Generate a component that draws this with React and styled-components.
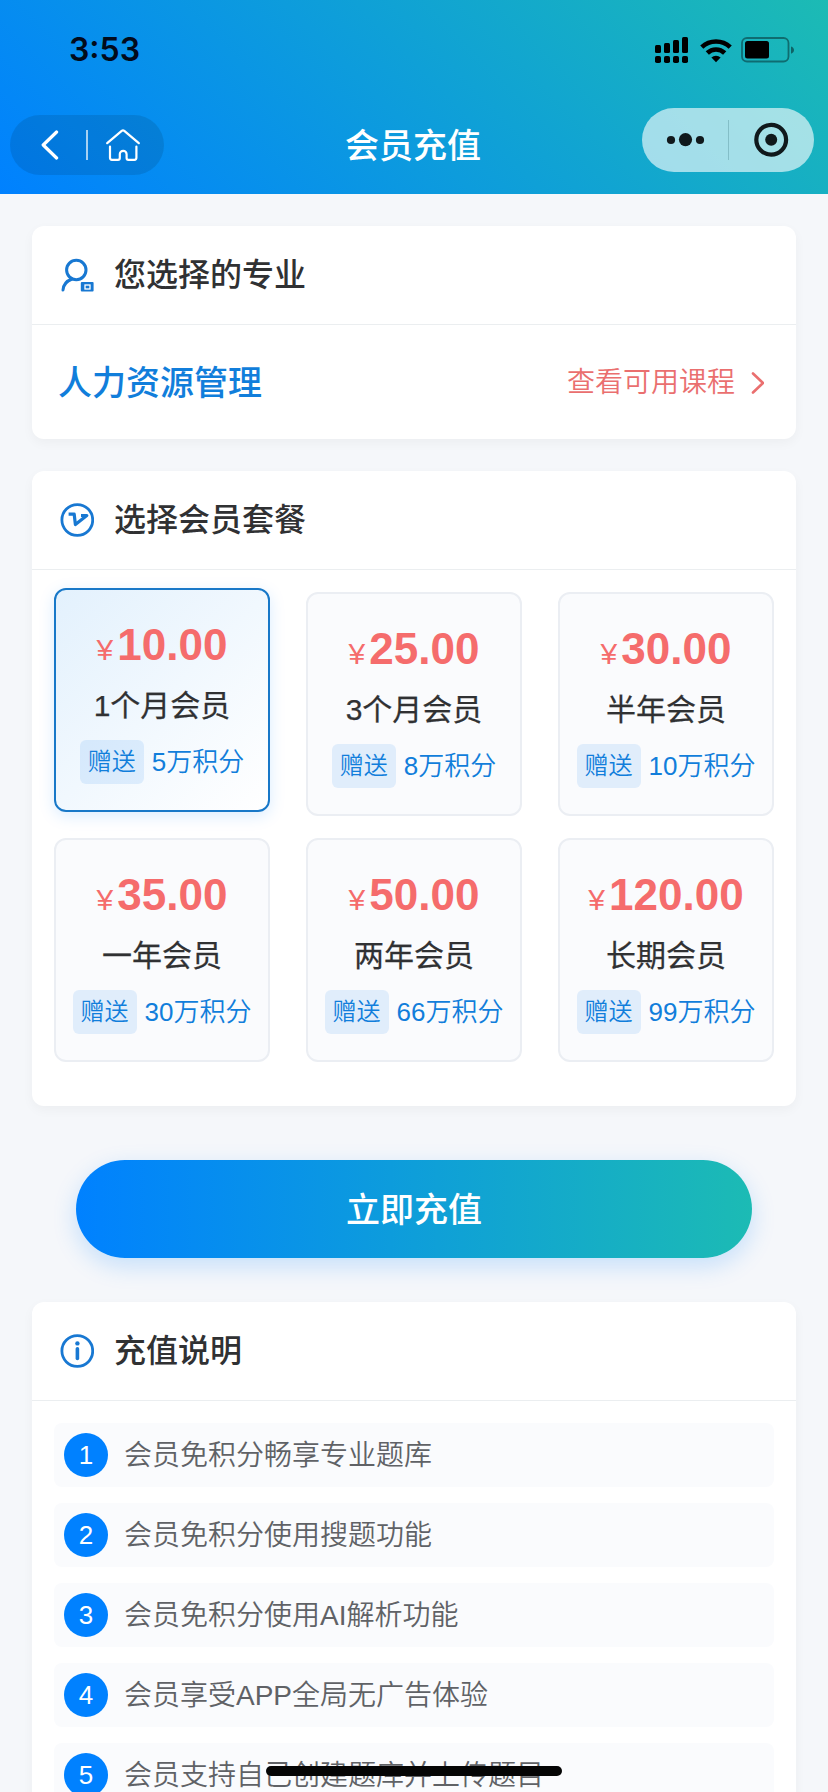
import React from "react";
import styled, { createGlobalStyle, css } from "styled-components";

const BLUE = "#117edb";
const INK = "#303133";
const CORAL = "#f56c6c";

const GlobalStyle = createGlobalStyle`
  *, *::before, *::after { box-sizing: border-box; }
  body {
    margin: 0;
    background: #f5f7fa;
    font-family: "Liberation Sans", "Noto Sans CJK SC", sans-serif;
  }
`;

const Screen = styled.div`
  position: relative;
  width: 828px;
  height: 1792px;
  overflow: hidden;
  background: #f5f7fa;
`;

const Header = styled.header`
  height: 194px;
  background: linear-gradient(45deg, #0081ff, #1cbbb4);
`;

const StatusBar = styled.div`
  display: flex;
  align-items: center;
  justify-content: space-between;
  height: 100px;
  padding: 0 34px 0 69px;
`;

const Clock = styled.span`
  font: 600 32px/40px Inter, sans-serif;
  color: #020b1c;
`;

const StatusIcons = styled.div`
  display: flex;
  align-items: center;
  gap: 12px;
`;

const NavBar = styled.nav`
  display: grid;
  grid-template-columns: 1fr auto 1fr;
  align-items: start;
  padding: 0 14px 0 10px;
`;

const BackPill = styled.div`
  display: flex;
  align-items: center;
  justify-self: start;
  width: 154px;
  height: 60px;
  margin-top: 15px;
  padding-left: 31px;
  border-radius: 30px;
  background: rgba(0, 0, 0, 0.1);
`;

const PillRule = styled.i`
  width: 2px;
  height: 30px;
  margin: 0 18px 0 27px;
  background: rgba(255, 255, 255, 0.65);
`;

const NavTitle = styled.h1`
  margin: 21px 0 0;
  padding-left: 2px;
  color: #fff;
  font-size: 34px;
  line-height: 50px;
  font-weight: 500;
`;

const Capsule = styled.div`
  display: flex;
  align-items: center;
  justify-self: end;
  width: 172px;
  height: 64px;
  margin-top: 8px;
  padding-left: 24px;
  border-radius: 32px;
  background: rgba(255, 255, 255, 0.61);
`;

const CapsuleRule = styled.i`
  width: 1px;
  height: 40px;
  margin: 0 24px 0 23px;
  background: rgba(0, 60, 70, 0.2);
`;

const Content = styled.main`
  display: flex;
  flex-direction: column;
  padding: 32px 32px 0;
`;

const Card = styled.section`
  margin-bottom: ${(p) => p.$after || 0}px;
  border-radius: 12px;
  background: #fff;
  box-shadow: 0 4px 12px rgba(0, 0, 0, 0.04);
`;

const CardHeader = styled.div`
  display: flex;
  align-items: center;
  gap: 20px;
  height: 99px;
  padding: 0 28px;
  border-bottom: 1px solid #ebeef0;
`;

const CardTitle = styled.h2`
  margin: 0;
  color: ${INK};
  font-size: 32px;
  line-height: 48px;
  font-weight: 500;
`;

const MajorRow = styled.div`
  display: flex;
  align-items: center;
  justify-content: space-between;
  height: 114px;
  padding: 2px 32px 0 26px;
`;

const Major = styled.strong`
  color: ${BLUE};
  font-size: 34px;
  line-height: 50px;
  font-weight: 500;
`;

const CourseLink = styled.a`
  display: flex;
  align-items: center;
  gap: 15px;
  color: #ea6f6f;
  font-size: 28px;
  font-weight: 350;
  line-height: 40px;
`;

const PlanGrid = styled.div`
  display: grid;
  grid-template-columns: repeat(3, 216px);
  gap: 22px 36px;
  padding: 22px 22px 44px;
`;

const PlanCard = styled.div`
  display: flex;
  flex-direction: column;
  align-items: center;
  height: 224px;
  padding-top: 27px;
  border: 2px solid #ebeef3;
  border-radius: 12px;
  background: #fafbfd;
  ${(p) =>
    p.$selected &&
    css`
      border-color: #1878c8;
      background: linear-gradient(135deg, #e3f1fd, #fff);
      box-shadow: 0 4px 16px rgba(0, 129, 255, 0.15);
      transform: translateY(-4px);
    `}
`;

const Price = styled.div`
  display: flex;
  align-items: baseline;
  gap: 4px;
  height: 56px;
  color: ${CORAL};
  font-size: 44px;
  line-height: 56px;
  font-weight: 700;
`;

const Currency = styled.span`
  font-size: 30px;
  font-weight: 400;
  font-family: "Liberation Sans", sans-serif;
`;

const PlanName = styled.div`
  margin-top: 13px;
  color: ${INK};
  font-size: 30px;
  line-height: 40px;
  -webkit-text-stroke: 0.25px currentColor;
`;

const Bonus = styled.div`
  display: flex;
  align-items: center;
  gap: 8px;
  margin-top: 14px;
  color: ${BLUE};
  font-size: 26px;
  font-weight: 350;
  line-height: 44px;
  white-space: nowrap;
`;

const BonusTag = styled.span`
  padding: 0 8px;
  border-radius: 6px;
  background: rgba(0, 118, 240, 0.1);
  font-size: 24px;
`;

const PayButton = styled.button`
  height: 98px;
  margin: 54px 44px 44px;
  padding: 2px 0 0;
  border: 0;
  border-radius: 49px;
  background: linear-gradient(90deg, #0081ff, #1cbbb4);
  box-shadow: 0 8px 24px rgba(0, 129, 255, 0.2);
  color: #fff;
  font-family: inherit;
  font-size: 34px;
  font-weight: 500;
  line-height: 96px;
`;

const NoteList = styled.ol`
  display: flex;
  flex-direction: column;
  gap: 16px;
  margin: 0;
  padding: 22px;
  list-style: none;
`;

const Note = styled.li`
  display: flex;
  align-items: center;
  gap: 16px;
  height: 64px;
  padding-left: 10px;
  border-radius: 8px;
  background: #fafbfd;
  color: #606266;
  font-size: 28px;
  font-weight: 350;
  line-height: 40px;
`;

const NoteText = styled.span`
  padding-top: 2px;
`;

const NoteNumber = styled.span`
  width: 44px;
  height: 44px;
  border-radius: 50%;
  background: #0081ff;
  color: #fff;
  font-size: 26px;
  line-height: 44px;
  text-align: center;
`;

const HomeIndicator = styled.div`
  position: absolute;
  left: 266px;
  bottom: 16px;
  width: 296px;
  height: 10px;
  border-radius: 5px;
  background: #050505;
`;

const SignalIcon = () => (
  <svg width="33" height="26" viewBox="0 0 33 26">
    {[8, 6, 3, 0].map((top, i) => (
      <g key={top}>
        <rect x={i * 9} y={top} width="6" height={16 - top} rx="1.5" />
        <rect x={i * 9} y="19" width="6" height="7" rx="1.8" />
      </g>
    ))}
  </svg>
);

const WifiIcon = () => (
  <svg width="32" height="25" viewBox="0 0 32 25" fill="none" stroke="#000" strokeWidth="4.6">
    <path d="M1.8 9.2a20.6 20.6 0 0 1 28.4 0" />
    <path d="M7.3 15a12.4 12.4 0 0 1 17.4 0" />
    <path d="M16 24.2l-4.6-4.7a6.6 6.6 0 0 1 9.2 0z" fill="#000" stroke="none" />
  </svg>
);

const BatteryIcon = () => (
  <svg width="50" height="26" viewBox="3 0 50 26" overflow="visible">
    <rect x="1" y="1" width="46.5" height="23.5" rx="5" fill="none" stroke="#000" strokeOpacity="0.4" strokeWidth="1.8" />
    <rect x="4" y="4" width="24" height="17.5" rx="2.5" />
    <path d="M50 9.5c4 1.2 4 6 0 7.2z" fillOpacity="0.45" />
  </svg>
);

const BackIcon = () => (
  <svg width="18" height="30" viewBox="0 0 18 30" fill="none" stroke="#fff" strokeWidth="3.2" strokeLinecap="round" strokeLinejoin="round">
    <path d="M15.6 2L2.2 15l13.4 13" />
  </svg>
);

const HomeIcon = () => (
  <svg width="34" height="32" viewBox="0 0 34 32" fill="none" stroke="#fff" strokeWidth="2.2" strokeLinecap="round" strokeLinejoin="round">
    <path d="M1.2 14.2L15.7 1.8q1.3-1 2.6 0l14.5 12.4" />
    <path d="M4 17.5v11.3q0 2 2 2h6q1.8 0 1.8-1.8v-3.8a3.4 3.4 0 0 1 6.8 0V29q0 1.8 1.8 1.8h6q2 0 2-2V17.5" />
  </svg>
);

const MoreIcon = () => (
  <svg width="39" height="14" viewBox="0 0 39 14" fill="#10191c">
    <circle cx="5" cy="7" r="4.1" />
    <circle cx="19.5" cy="6.6" r="6.6" />
    <circle cx="34" cy="7" r="4.1" />
  </svg>
);

const TargetIcon = () => (
  <svg width="36" height="36" viewBox="0 0 36 36">
    <circle cx="18.2" cy="17.7" r="14.9" fill="none" stroke="#10191c" strokeWidth="4.2" />
    <circle cx="18.2" cy="17.7" r="6" fill="#10191c" />
  </svg>
);

const UserIcon = () => (
  <svg width="34" height="34" viewBox="0 0 34 34" fill="none" stroke="#1878d2" strokeWidth="3" strokeLinecap="round">
    <circle cx="16.3" cy="12" r="9.7" />
    <path d="M12 21C6.5 23 3.4 26.8 3 32" />
    <rect x="20.8" y="24" width="12.8" height="9.6" rx="1" fill="#1878d2" stroke="none" />
    <rect x="25" y="27" width="5" height="4" stroke="#fff" strokeWidth="1.3" />
  </svg>
);

const MemberIcon = () => (
  <svg width="34" height="34" viewBox="0 0 34 34" fill="none" stroke="#1878d2" strokeWidth="2.8" strokeLinejoin="round">
    <circle cx="17.3" cy="17" r="15.4" />
    <path d="M8.6 11.2h5.6L15.4 21.6 26.8 12.5H21" strokeWidth="3.2" />
  </svg>
);

const InfoIcon = () => (
  <svg width="34" height="34" viewBox="0 0 34 34" fill="none" stroke="#1878d2" strokeWidth="2.8" strokeLinecap="round">
    <circle cx="17.3" cy="17" r="15.4" />
    <path d="M17.4 14.8v9.6" strokeWidth="3.6" />
    <circle cx="17.4" cy="9.4" r="2.2" fill="#1878d2" stroke="none" />
  </svg>
);

const ChevronIcon = () => (
  <svg width="14" height="24" viewBox="0 0 14 24" fill="none" stroke="#ea6f6f" strokeWidth="2.6" strokeLinecap="round" strokeLinejoin="round">
    <path d="M3 2.5L13 12 3 21.5" />
  </svg>
);

const plans = [
  { price: "10.00", name: "1个月会员", points: "5万积分", selected: true },
  { price: "25.00", name: "3个月会员", points: "8万积分" },
  { price: "30.00", name: "半年会员", points: "10万积分" },
  { price: "35.00", name: "一年会员", points: "30万积分" },
  { price: "50.00", name: "两年会员", points: "66万积分" },
  { price: "120.00", name: "长期会员", points: "99万积分" },
];

const notes = [
  "会员免积分畅享专业题库",
  "会员免积分使用搜题功能",
  "会员免积分使用AI解析功能",
  "会员享受APP全局无广告体验",
  "会员支持自己创建题库并上传题目",
];

const Plan = ({ price, name, points, selected }) => (
  <PlanCard $selected={selected}>
    <Price>
      <Currency>¥</Currency>
      {price}
    </Price>
    <PlanName>{name}</PlanName>
    <Bonus>
      <BonusTag>赠送</BonusTag>
      {points}
    </Bonus>
  </PlanCard>
);

export default function App() {
  return (
    <Screen>
      <GlobalStyle />
      <Header>
        <StatusBar>
          <Clock>3:53</Clock>
          <StatusIcons>
            <SignalIcon />
            <WifiIcon />
            <BatteryIcon />
          </StatusIcons>
        </StatusBar>
        <NavBar>
          <BackPill>
            <BackIcon />
            <PillRule />
            <HomeIcon />
          </BackPill>
          <NavTitle>会员充值</NavTitle>
          <Capsule>
            <MoreIcon />
            <CapsuleRule />
            <TargetIcon />
          </Capsule>
        </NavBar>
      </Header>
      <Content>
        <Card $after={32}>
          <CardHeader>
            <UserIcon />
            <CardTitle>您选择的专业</CardTitle>
          </CardHeader>
          <MajorRow>
            <Major>人力资源管理</Major>
            <CourseLink>
              查看可用课程
              <ChevronIcon />
            </CourseLink>
          </MajorRow>
        </Card>
        <Card>
          <CardHeader>
            <MemberIcon />
            <CardTitle>选择会员套餐</CardTitle>
          </CardHeader>
          <PlanGrid>
            {plans.map((plan) => (
              <Plan key={plan.name} {...plan} />
            ))}
          </PlanGrid>
        </Card>
        <PayButton>立即充值</PayButton>
        <Card>
          <CardHeader>
            <InfoIcon />
            <CardTitle>充值说明</CardTitle>
          </CardHeader>
          <NoteList>
            {notes.map((text, i) => (
              <Note key={text}>
                <NoteNumber>{i + 1}</NoteNumber>
                <NoteText>{text}</NoteText>
              </Note>
            ))}
          </NoteList>
        </Card>
      </Content>
      <HomeIndicator />
    </Screen>
  );
}
